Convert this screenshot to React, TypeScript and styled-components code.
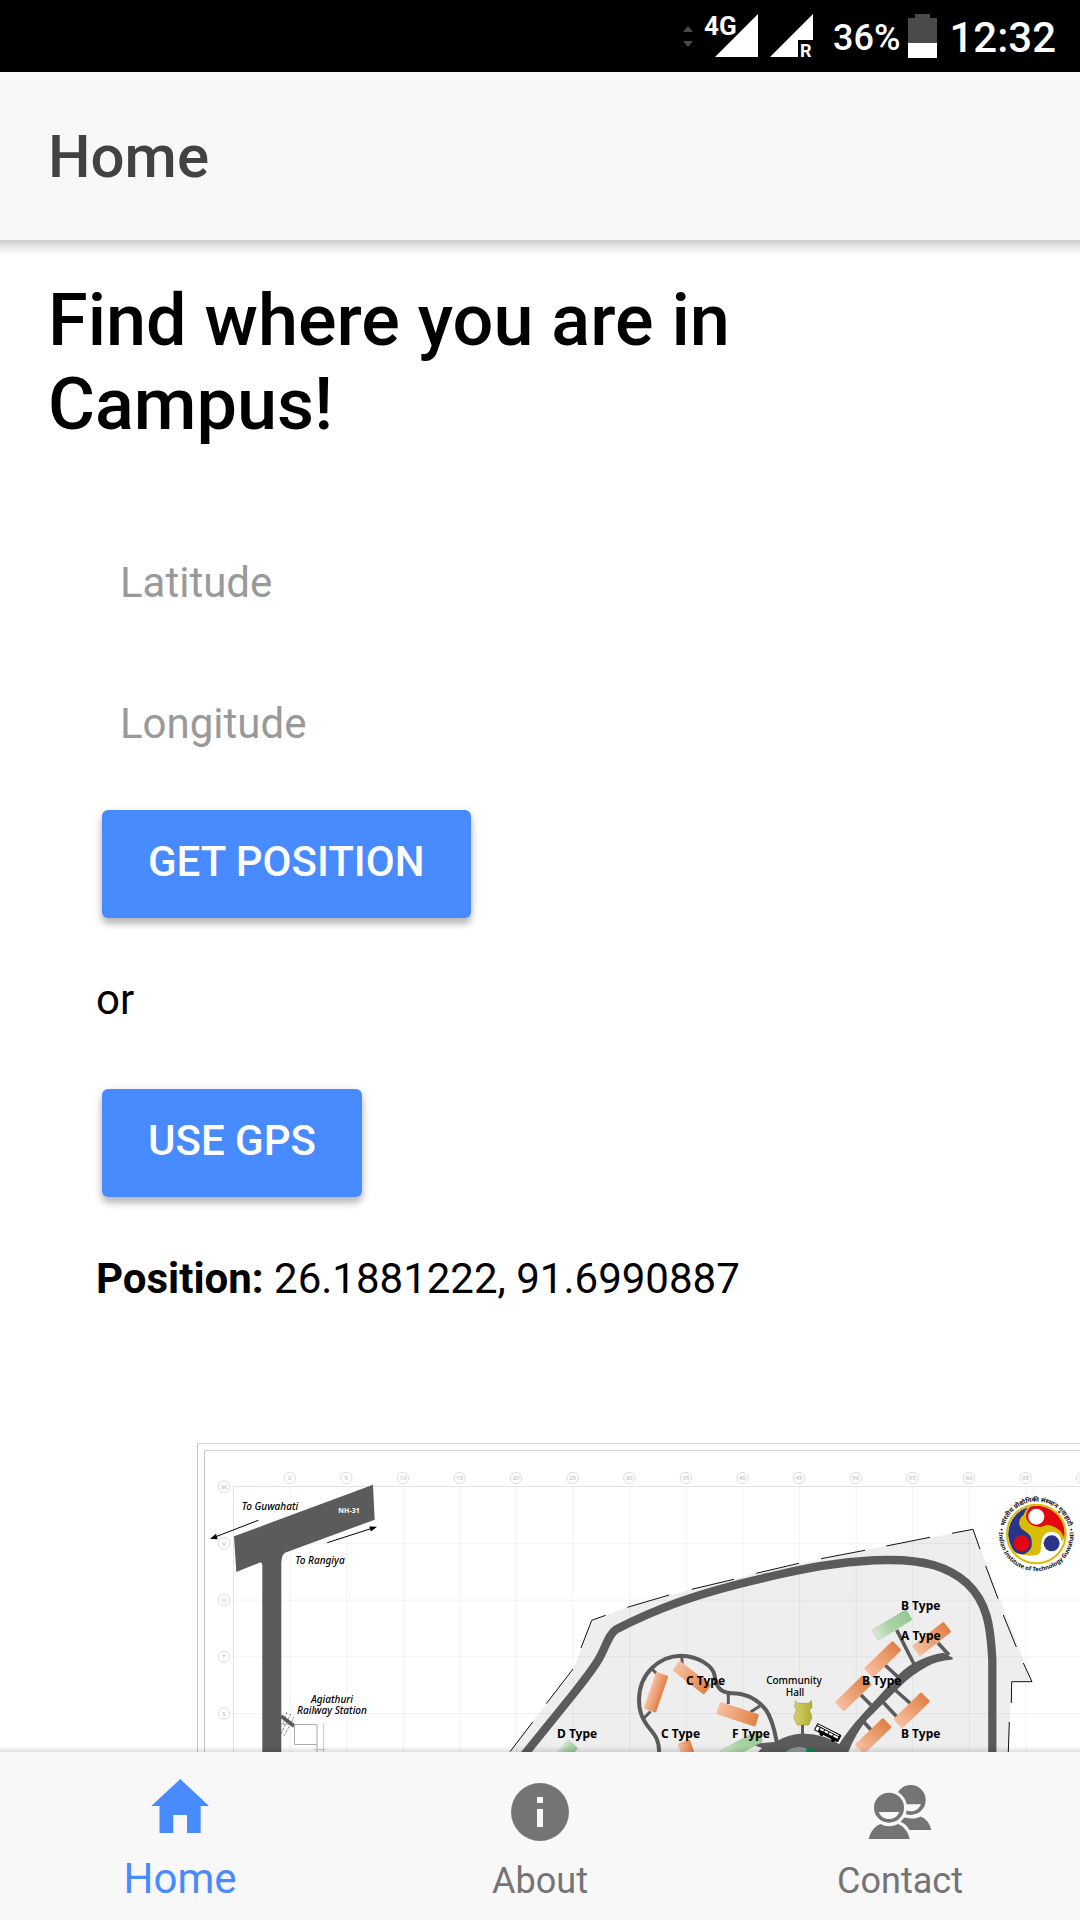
import React, { useState } from "react";
import styled, { createGlobalStyle } from "styled-components";

const GlobalStyle = createGlobalStyle`
  * { box-sizing: border-box; }
  body { margin: 0; background: #fff; font-family: Roboto, "Noto Sans", sans-serif; }
`;

const blue = "#488aff";
const bar = "#f8f8f8";
const road = "#5b5b5b";

const Screen = styled.div`
  display: flex;
  flex-direction: column;
  height: 100vh;
  background: #fff;
  color: #000;
`;

const StatusBar = styled.div`
  flex: none;
  display: flex;
  align-items: center;
  justify-content: flex-end;
  height: 72px;
  padding: 0 24px;
  background: #000;
  color: #fff;
  font-weight: 500;
`;

const SignalGroup = styled.div`
  display: flex;
  align-items: center;
  gap: 12px;
  margin-right: 20px;
  svg { overflow: visible; }
`;

const BatteryLevel = styled.span`
  padding-top: 4px;
  font-size: 36px;
  line-height: 48px;
  margin-right: 8px;
`;

const Clock = styled.time`
  padding-top: 4px;
  font-size: 42px;
  line-height: 48px;
  margin-left: 12px;
`;

const Header = styled.header`
  position: relative;
  z-index: 1;
  flex: none;
  display: flex;
  align-items: center;
  height: 168px;
  padding: 2px 48px 0;
  background: ${bar};
  &::after {
    content: "";
    position: absolute;
    left: 0;
    right: 0;
    top: 100%;
    height: 15px;
    background: linear-gradient(rgba(0, 0, 0, 0.2), rgba(0, 0, 0, 0.08) 50%, rgba(0, 0, 0, 0));
  }
`;

const Title = styled.h1`
  margin: 0;
  color: #424242;
  font-size: 60px;
  line-height: 72px;
  font-weight: 500;
`;

const Content = styled.main`
  flex: 1;
  min-height: 0;
  overflow-x: hidden;
  overflow-y: auto;
  scrollbar-width: none;
  padding-top: 39px;
`;

const Heading = styled.h2`
  margin: 0;
  padding: 0 48px;
  max-width: 900px;
  font-size: 72px;
  line-height: 84px;
  font-weight: 500;
`;

const Finder = styled.form`
  display: flex;
  flex-direction: column;
  align-items: flex-start;
  margin-top: 65px;
  padding: 0 96px;
`;

const Field = styled.input`
  width: 100%;
  height: 141px;
  padding: 0 24px;
  border: 0;
  outline: 0;
  background: transparent;
  font: 400 42px/48px Roboto, sans-serif;
  color: #000;
  &::placeholder { color: #999; opacity: 1; }
`;

const ActionButton = styled.button`
  height: 108px;
  margin: 16px 6px 0;
  padding: 0 46px 4px;
  border: 0;
  border-radius: 6px;
  background: ${blue};
  color: #fff;
  font: 500 42px/48px Roboto, sans-serif;
  text-transform: uppercase;
  box-shadow: 0 6px 6px rgba(0, 0, 0, 0.2), 0 3px 12px rgba(0, 0, 0, 0.14);
`;

const Text = styled.p`
  margin: 58px 0 0;
  font-size: 42px;
  line-height: 48px;
  & + ${ActionButton} { margin-top: 65px; }
`;

const MapFrame = styled.figure`
  margin: 140px 0 0 197px;
  overflow: hidden;
  svg { display: block; }
`;

const TabBar = styled.nav`
  position: relative;
  z-index: 1;
  flex: none;
  display: grid;
  grid-template-columns: repeat(3, 1fr);
  height: 168px;
  background: ${bar};
  &::before {
    content: "";
    position: absolute;
    left: 0;
    right: 0;
    bottom: 100%;
    height: 6px;
    background: linear-gradient(rgba(0, 0, 0, 0), rgba(0, 0, 0, 0.12));
  }
`;

const Tab = styled.button<{ $active: boolean }>`
  display: flex;
  flex-direction: column;
  align-items: center;
  justify-content: flex-end;
  gap: 18px;
  padding: 0 0 17px;
  border: 0;
  background: transparent;
  color: ${(p) => (p.$active ? blue : "#747474")};
  font-family: Roboto, sans-serif;
  font-size: ${(p) => (p.$active ? 42 : 36)}px;
  line-height: ${(p) => (p.$active ? 48 : 44)}px;
`;

const TabIcon = styled.svg`
  width: 60px;
  height: 60px;
  overflow: visible;
  fill: currentColor;
`;

function HomeIcon() {
  return (
    <TabIcon viewBox="0 0 60 60" aria-hidden="true">
      <path d="M30.300 2 L59 29 H50.700 V56 H37 V38 H23.300 V56 H9.500 V29 H1.300 Z" />
    </TabIcon>
  );
}

function InfoIcon() {
  return (
    <TabIcon viewBox="0 0 60 60" aria-hidden="true">
      <circle cx="30" cy="31" r="29" />
      <path fill={bar} d="M27 16h6v6h-6z M27 28h6v18h-6z" />
    </TabIcon>
  );
}

function ContactIcon() {
  return (
    <TabIcon viewBox="0 0 60 60" aria-hidden="true">
      <circle cx="40.700" cy="19" r="15" />
      <path fill={bar} d="M34 23.300 H51 C49 28 45.500 30.300 41 30.300 C38.500 30.300 36 29.500 34 28 Z" />
      <path d="M31 38 L35.500 36.500 C41 38.300 46 37.800 50.500 35.500 C56 37.500 60 42.500 61.300 49 H39.500 C37.500 45.500 35 42.500 31 41 Z" />
      <circle cx="19" cy="26.700" r="18" fill={bar} />
      <circle cx="19" cy="26.700" r="15" />
      <path fill={bar} d="M8.700 31 H29.300 C27.500 35.500 23.800 38 19 38 C14.200 38 10.500 35.500 8.700 31 Z" />
      <path d="M-1.300 58 C0.500 50.500 4.500 45.500 10.500 43 C16 46 22 46 28 43 C34 45.500 38 50.500 39.700 58 Z" />
    </TabIcon>
  );
}

function Signals() {
  return (
    <SignalGroup aria-hidden="true">
      <svg width="10" height="44" viewBox="684 15 10 44" fill="#4a4a4a">
        <path d="M684 33l5-6 5 6z M684 42h10l-5 6z" />
      </svg>
      <svg width="53" height="52" viewBox="704 9 53 52" fill="#fff">
        <path d="M714 56 L757 13 V56 Z" />
        <text x="703" y="34" fontSize="26" fontWeight="700" stroke="#000" strokeWidth="4" paintOrder="stroke">4G</text>
      </svg>
      <svg width="43" height="52" viewBox="771 9 43 52" fill="#fff">
        <path d="M771 56 L814 13 V39 H799 V56 Z" />
        <text x="801" y="56" fontSize="18" fontWeight="700">R</text>
      </svg>
    </SignalGroup>
  );
}

function Battery() {
  return (
    <svg width="29" height="44" viewBox="0 0 29 44" aria-hidden="true">
      <path fill="#4a4a4a" d="M7 0h15v4h7v25H0V4h7z" />
      <path fill="#fff" d="M0 29h29v15H0z" />
    </svg>
  );
}

type Block = { x: number; y: number; w: number; h: number; a: number; green?: boolean };

const blocks: Block[] = [
  { x: 892, y: 1625, w: 40, h: 12, a: -31, green: true },
  { x: 931.7, y: 1639, w: 40, h: 13, a: -38 },
  { x: 882.7, y: 1659.3, w: 40, h: 13, a: -44 },
  { x: 853.3, y: 1693.3, w: 39, h: 13, a: -44 },
  { x: 911.7, y: 1710.3, w: 39, h: 13, a: -44 },
  { x: 873.3, y: 1736, w: 39, h: 13, a: -44 },
  { x: 656, y: 1692.3, w: 13, h: 39, a: 19 },
  { x: 691.7, y: 1677.7, w: 40, h: 12, a: 38 },
  { x: 737.7, y: 1714.3, w: 41, h: 13, a: 18 },
  { x: 690, y: 1760, w: 13, h: 39, a: -19 },
  { x: 560, y: 1758.5, w: 13, h: 39, a: 42, green: true },
  { x: 741.7, y: 1746, w: 42, h: 12, a: -28, green: true },
];

const typeLabels: [string, number, number][] = [
  ["B Type", 901, 1610],
  ["A Type", 901, 1640],
  ["B Type", 862, 1685],
  ["B Type", 901, 1738],
  ["C Type", 686, 1685],
  ["D Type", 557, 1738],
  ["C Type", 661, 1738],
  ["F Type", 732, 1738],
];

function Institute() {
  return (
    <g transform="translate(980 1480) scale(0.3333)">
      <circle cx="169" cy="162" r="84" fill="#d9bd00" />
      <path fill="#29348a" d="M143 82 A84 84 0 0 0 96 204 A31 31 0 0 0 155 186 C156 162 138 158 125 146 C112 132 118 112 131 104 Q136 92 143 82 Z" />
      <path fill="#fff" d="M253 178 A84 84 0 0 1 107 219 C130 228 160 230 176 222 C186 214 181 200 185 186 A30 30 0 0 1 245 184 Z" />
      <path fill="#e30613" d="M150 80 A84 84 0 0 1 253 176 C248 152 226 137 200 134 C180 146 150 140 140 118 Q134 100 150 80 Z" />
      <circle cx="169" cy="162" r="88" fill="none" stroke="#d9bd00" strokeWidth="6" />
      <circle cx="169" cy="110" r="24" fill="#fff" />
      <circle cx="125" cy="190" r="24" fill="#e30613" />
      <circle cx="215" cy="190" r="24" fill="#29348a" />
      <path id="ring-top" fill="none" d="M71 150 A99 99 0 0 1 267 150" />
      <path id="ring-low" fill="none" d="M61 132 A112 112 0 1 0 277 132" />
      <g fontFamily='"Noto Sans", sans-serif' fontWeight="700" textAnchor="middle" fill="#111">
        <text fontSize="19"><textPath href="#ring-top" startOffset="50%">भारतीय प्रौद्योगिकी संस्थान गुवाहाटी</textPath></text>
        <text fontSize="18"><textPath href="#ring-low" startOffset="50%">• Indian Institute of Technology Guwahati •</textPath></text>
      </g>
    </g>
  );
}

function CampusMap() {
  const columns = Array.from({ length: 17 }, (_, i) => i);
  const rows = ["W", "V", "U", "T", "S"];
  return (
    <svg width="1003" height="309" viewBox="197 1443 1003 309" role="img" aria-label="Campus map" fontFamily='"Noto Sans", sans-serif'>
      <defs>
        <linearGradient id="orange">
          <stop offset="0" stopColor="#f7bfa0" />
          <stop offset="1" stopColor="#e18145" />
        </linearGradient>
        <linearGradient id="green">
          <stop offset="0" stopColor="#d7e6d5" />
          <stop offset="0.4" stopColor="#acd5a8" />
          <stop offset="1" stopColor="#94c991" />
        </linearGradient>
        <linearGradient id="hall">
          <stop offset="0" stopColor="#d6d268" />
          <stop offset="1" stopColor="#b3ac36" />
        </linearGradient>
      </defs>
      <path fill="none" stroke="#c4c4c4" d="M197.500 1760 V1443.500 M204.500 1760 V1450.500" />
      <path fill="none" stroke="#d4d4d4" d="M197 1443.500 H1200 M204 1450.500 H1200" />
      <path
        fill="#eee"
        d="M510 1752 L546.500 1703.500 L573.300 1669.300 L591.700 1620.300 L627.300 1607.300 L691.700 1589.300 L780 1568 L865 1550.300 L973 1529.300 L1032 1681.700 H1011.700 L1008.300 1752 Z"
      />
      <g stroke="#000" strokeOpacity="0.05">
        <path fill="none" strokeOpacity="0.1" d="M233.500 1752 V1486.500 H1200" />
        {columns.map((i) => (
          <line key={i} x1={290.2 + i * 56.6} x2={290.2 + i * 56.6} y1="1486" y2="1752" />
        ))}
        {rows.slice(1).map((r, i) => (
          <line key={r} x1="233" x2="1200" y1={1543.4 + i * 56.7} y2={1543.4 + i * 56.7} />
        ))}
      </g>
      <g fill="#fff" stroke="#dcdcdc" fontSize="6" textAnchor="middle">
        {columns.map((i) => (
          <g key={i}>
            <circle cx={289.7 + i * 56.6} cy="1478" r="5.700" />
            <text x={289.7 + i * 56.6} y="1480" fill="#b4b4b4" stroke="none">{i * 5}</text>
          </g>
        ))}
        {rows.map((r, i) => (
          <g key={r}>
            <circle cx="224" cy={1486.7 + i * 56.7} r="5.700" />
            <text x="224" y={1489 + i * 56.7} fill="#b4b4b4" stroke="none">{r}</text>
          </g>
        ))}
      </g>
      <path
        fill={road}
        d="M234 1536.300 L373 1484.700 L374.700 1519.700 L285 1552.700 Q281.500 1555 281.300 1563 V1752 H262.300 V1565 Q262.300 1562 260 1562.500 L236.300 1572 Z"
      />
      <path stroke="#000" fill="none" d="M258.300 1520.300 L215 1537 M327.300 1542.700 L372 1528.300" />
      <path d="M210 1538.700 l6-5 1.700 5.500z M377 1526.700 l-7.700-0.300 1.700 5z" />
      <path stroke={road} strokeWidth="3.500" d="M281 1716 L294 1726" />
      <path fill="none" stroke="#aaa" d="M294.500 1724.500 h22.500 v20 h-22.500z M317 1744 v8" />
      <path fill="none" stroke="#ccc" d="M323.500 1723 v29 M314 1749.500 h12" />
      <path fill="none" stroke="#444" strokeWidth="0.600" strokeDasharray="3 1" d="M280.700 1734 L290.700 1714 M284 1736 L294 1717 M287 1712 L283 1724 M282 1724 H294" />
      <path
        fill="none"
        stroke="#111"
        d="M581 1648 L591.700 1620.300 L605.700 1615.300 M627.300 1607.300 L669.300 1595 M691.700 1589.300 L734 1579.300 M756.300 1573.300 L799 1563.300 M821 1558.700 L865 1550.300 M886.300 1546 L930 1537.300 M952 1533.300 L973 1529.300 L980 1549.300 M985.700 1566 L998 1598.700 M1003.300 1615 L1016.300 1647 M1023.300 1663 L1032 1681.700 H1011.700 L1011.300 1703 M1009.300 1722 L1008.300 1752 M573 1669 L546.300 1703.700 M532.700 1722 L510 1751.700"
      />
      <g fill="none" stroke={road}>
        <path
          strokeWidth="8.300"
          d="M524 1755 L573.300 1694 Q594 1668 600 1657 C606 1646 609 1634 616 1629.500 Q646 1614 680 1601.700 C712 1590 745 1582 780 1574.300 C815 1566 850 1560.500 886.700 1560 C925 1559.500 948 1567 966.700 1583 C987 1602 990.500 1625 992.300 1660 V1755"
        />
        <path
          strokeWidth="4"
          d="M659 1755 C660 1741 655 1735 650 1729 C641 1718 639 1710 639 1700 C639 1674 659 1656 681 1655.700 C698 1656 713 1666 714.500 1675 C716 1688 721 1692 731 1693.300 C748 1693 758 1700 766 1710 C773 1720 775 1733 776.700 1742"
        />
        <path
          strokeWidth="3"
          d="M651 1668 l6 6 M681.700 1656 l0.600 8 M728.300 1693 v11 M760 1706 l-9.500 6 M643.500 1718.500 l7-7 M802.500 1724 v12"
        />
        <path
          strokeWidth="3.600"
          d="M896.700 1630 L914 1664 M938 1643 L949 1655 M885 1665 L898 1677 M861 1695 L871 1705 M893 1688 L911 1704 M882 1701 L897 1717 M862 1720 L872 1731"
        />
      </g>
      <path
        fill={road}
        d="M838 1746 Q848 1730 863.300 1713.300 L898.300 1675 Q908 1665 920 1660 Q930 1655 943.300 1652.700 L952.700 1657.700 V1659.500 Q936 1661 926.700 1666.700 Q910 1676 900 1686.700 L866.700 1720 Q856 1733 848.300 1752 H838 Z"
      />
      <path fill={road} d="M750 1744 L775 1742 Q788 1734 803 1733.500 Q826 1734 842 1746 V1754 H756 L762 1748 Z" />
      <circle cx="799" cy="1767" r="20" fill="#8c9ca0" />
      <path fill="#0a8a38" d="M807 1747 L819 1752 H806 Z" />
      {blocks.map((b, i) => (
        <rect
          key={i}
          x={-b.w / 2}
          y={-b.h / 2}
          width={b.w}
          height={b.h}
          rx="1.500"
          transform={`translate(${b.x} ${b.y}) rotate(${b.a})`}
          fill={b.green ? "url(#green)" : "url(#orange)"}
          stroke={b.green ? "#8ba98a" : "none"}
          strokeWidth="0.500"
          strokeDasharray="1 1"
        />
      ))}
      <path
        fill="url(#hall)"
        stroke="#918c35"
        strokeWidth="0.500"
        d="M795.300 1700.700 l2 2.600 h11.300 l3-2.600 0.300 7.600 -2.600 1 2.700 8 -3.300 7.700 h-11.400 l-3.600-7.700 3-8 -2-1.300z"
      />
      <g transform="translate(827.700 1732.700) rotate(27)">
        <rect x="-13.500" y="-4" width="27" height="8" rx="1" fill="#000" />
        <path fill="#fff" d="M-12.500 -3h24v1h-24z M-12.500 -1h3v4h-3z M-8.500 -1h4v2h-4z M-3.500 -1h4v2h-4z M1.500 -1h4v2h-4z M6.500 -1h5v2h-5z" />
        <circle cx="-5" cy="4" r="2" />
        <circle cx="8" cy="4" r="2" />
      </g>
      <g fontSize="12" fontWeight="700">
        {typeLabels.map(([label, x, y], i) => (
          <text key={i} x={x} y={y}>{label}</text>
        ))}
      </g>
      <g fontSize="10" textAnchor="middle">
        <text x="794" y="1684" fontWeight="500">Community</text>
        <text x="795" y="1696" fontWeight="500">Hall</text>
        <g fontStyle="italic" fontWeight="500">
          <text x="270" y="1510">To Guwahati</text>
          <text x="320" y="1564">To Rangiya</text>
          <text x="332" y="1703">Agiathuri</text>
          <text x="332" y="1714">Railway Station</text>
        </g>
        <text x="349" y="1513" fontSize="7" fontWeight="700" fill="#fff">NH-31</text>
      </g>
      <Institute />
    </svg>
  );
}

const tabs = [
  { name: "Home", Icon: HomeIcon },
  { name: "About", Icon: InfoIcon },
  { name: "Contact", Icon: ContactIcon },
];

export default function App() {
  const [active, setActive] = useState("Home");
  return (
    <Screen>
      <GlobalStyle />
      <StatusBar>
        <Signals />
        <BatteryLevel>36%</BatteryLevel>
        <Battery />
        <Clock>12:32</Clock>
      </StatusBar>
      <Header>
        <Title>Home</Title>
      </Header>
      <Content>
        <Heading>Find where you are in Campus!</Heading>
        <Finder onSubmit={(e) => e.preventDefault()}>
          <Field aria-label="Latitude" placeholder="Latitude" inputMode="decimal" />
          <Field aria-label="Longitude" placeholder="Longitude" inputMode="decimal" />
          <ActionButton type="submit">Get position</ActionButton>
          <Text>or</Text>
          <ActionButton type="button">Use GPS</ActionButton>
          <Text>
            <b>Position:</b> 26.1881222, 91.6990887
          </Text>
        </Finder>
        <MapFrame>
          <CampusMap />
        </MapFrame>
      </Content>
      <TabBar>
        {tabs.map(({ name, Icon }) => (
          <Tab key={name} type="button" $active={active === name} onClick={() => setActive(name)}>
            <Icon />
            <span>{name}</span>
          </Tab>
        ))}
      </TabBar>
    </Screen>
  );
}
